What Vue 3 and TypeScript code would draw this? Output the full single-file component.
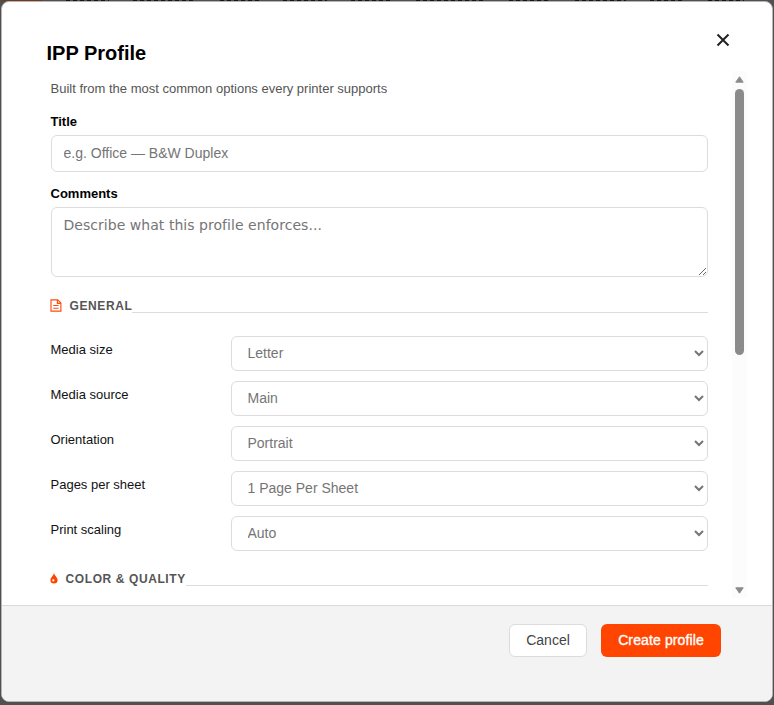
<script setup lang="ts">
import { ref } from 'vue'

interface Option {
  label: string
  value: string
}

const title = ref('')
const comments = ref('')
const general = ref<Option[]>([
  { label: 'Media size', value: 'Letter' },
  { label: 'Media source', value: 'Main' },
  { label: 'Orientation', value: 'Portrait' },
  { label: 'Pages per sheet', value: '1 Page Per Sheet' },
  { label: 'Print scaling', value: 'Auto' },
])
const tabs = [40, 43, 63, 39, 44, 41, 69, 42, 51, 34, 36]
</script>

<template>
  <div class="backdrop">
    <div class="tabs"><i v-for="(w, i) in tabs" :key="i" :class="{ active: i === 0 }" :style="{ width: w + 'px' }"></i></div>
    <section class="modal" role="dialog">
      <header class="head">
        <h2>IPP Profile</h2>
        <button class="close" type="button">
          <svg width="14" height="14" viewBox="0 0 14 14"><path d="M1.5 1.5 12.5 12.5M12.5 1.5 1.5 12.5" /></svg>
        </button>
      </header>
      <div class="body">
        <div class="content">
          <p class="intro">Built from the most common options every printer supports</p>
          <label class="label title-label" for="title">Title</label>
          <input id="title" v-model="title" class="field" type="text" placeholder="e.g. Office — B&amp;W Duplex" />
          <label class="label comments-label" for="comments">Comments</label>
          <textarea id="comments" v-model="comments" class="field area" placeholder="Describe what this profile enforces..."></textarea>
          <div class="section general">
            <svg width="12" height="13" viewBox="0 0 12 13"><path d="M1 .9H7.7L10.9 4V12.1H1ZM7.4 1V4.3H10.8M3.2 6.5H8.6M3.2 9.2H8.6" fill="none" stroke="#ff4b0b" stroke-width="1.15" /></svg>
            <h3>GENERAL</h3><span class="rule"></span>
          </div>
          <div class="rows">
            <div v-for="o in general" :key="o.label" class="row">
              <label>{{ o.label }}</label>
              <select><option>{{ o.value }}</option></select>
            </div>
          </div>
          <div class="section color">
            <svg width="8" height="11" viewBox="0 0 8 11"><path d="M4 .2C4.6 2.7 7.6 4.4 7.6 7A3.6 3.6 0 0 1 .4 7C.4 4.5 3.3 2.7 4 .2Z" fill="#ff4500" /><circle cx="3.3" cy="7.3" r="1.15" fill="#fff" /></svg>
            <h3>COLOR &amp; QUALITY</h3><span class="rule"></span>
          </div>
        </div>
        <div class="scrollbar">
          <svg width="9" height="7" viewBox="0 0 9 7"><path d="M4.5 .8 8.2 6.2H.8Z" /></svg>
          <div class="thumb"></div>
          <svg class="down" width="9" height="7" viewBox="0 0 9 7"><path d="M.8 .8H8.2L4.5 6.2Z" /></svg>
        </div>
      </div>
      <footer class="foot">
        <button type="button" class="btn cancel">Cancel</button>
        <button type="button" class="btn primary">Create profile</button>
      </footer>
    </section>
  </div>
</template>

<style>
body { margin: 0; background: #4d4d4d; overflow: hidden; }
</style>

<style scoped>
* { box-sizing: border-box; }
.backdrop { position: relative; height: 705px; padding: 1px 1px 3px; background: #505050; font-family: "Liberation Sans", Arial, sans-serif; }
.tabs { position: absolute; inset: 0 0 auto 2px; display: flex; gap: 24px; }
.tabs i { height: 1px; background: repeating-linear-gradient(90deg, #161616 0 4px, #505050 4px 7px); }
.tabs .active { background: #76371f; }
.modal { display: flex; flex-direction: column; height: 701px; border: 1px solid #b5b5b5; border-radius: 8px; background: #fff; overflow: hidden; }
.head { display: flex; justify-content: space-between; height: 69px; padding: 31px 42px 0 44.5px; flex: none; }
h2 { margin: 9px 0 0; font-size: 20px; line-height: 23px; font-weight: 700; color: #000; }
.close { width: 14px; height: 14px; padding: 0; border: 0; background: none; }
.close svg { display: block; fill: none; stroke: #222; stroke-width: 2; }
.body { display: flex; height: 534px; flex: none; }
.content { width: 657.5px; margin-left: 48.5px; }
.intro { margin: 10px 0 0; font-size: 13px; line-height: 15px; color: #555; }
.label { display: block; font-size: 13px; line-height: 15px; font-weight: 700; color: #000; }
.title-label { margin-top: 18px; }
.comments-label { margin-top: 14px; }
.field { display: block; width: 100%; height: 37px; margin: 6px 0 0; padding: 0 12px 2px; border: 1px solid #dcdcdc; border-radius: 6px; background: #fff; font-family: inherit; font-size: 14px; color: #333; outline: none; }
.field::placeholder { color: #757575; }
.area { height: 70px; padding: 8px 12px; font-family: "DejaVu Sans", sans-serif; line-height: 19px; letter-spacing: .04px; }
.section { display: flex; align-items: center; height: 15px; }
.section svg { flex: none; margin-left: -1px; }
.general { margin-top: 21px; }
.color { margin-top: 20px; }
h3 { position: relative; top: 1px; margin: 0 0 0 8px; font-size: 12px; line-height: 15px; letter-spacing: .6px; color: #555; white-space: nowrap; }
.rule { flex: 1; align-self: flex-end; height: 1px; background: #dcdcdc; }
.rows { display: grid; gap: 10px; margin-top: 23px; }
.row { display: grid; grid-template-columns: 180px 1fr; height: 35px; font-size: 13px; color: #111; }
.row label { padding-top: 6px; line-height: 15px; }
select { width: 100%; height: 35px; padding: 0 0 2px 12px; border: 1px solid #dcdcdc; border-radius: 6px; background: #fff; font-family: inherit; font-size: 14px; color: #757575; }
.scrollbar { display: flex; flex-direction: column; align-items: center; width: 15px; height: 527px; margin-left: 24px; padding: 5px 0 4px; background: #fcfcfc; fill: #8b8b8b; stroke: #8b8b8b; stroke-linejoin: round; }
.thumb { width: 9px; height: 266px; margin-top: 6px; border-radius: 5px; background: #8b8b8b; }
.down { margin-top: auto; }
.foot { display: flex; flex: 1; justify-content: flex-end; align-items: flex-start; gap: 14px; padding: 18px 51px 0; border-top: 1px solid #dadada; background: #f3f3f3; }
.btn { height: 33px; padding: 0 0 2px; border-radius: 6px; font-family: inherit; font-size: 14px; }
.cancel { width: 78px; border: 1px solid #dcdcdc; background: #fff; color: #444; }
.primary { width: 120px; border: 0; background: #ff4500; color: #fff; letter-spacing: .12px; -webkit-text-stroke: .35px #fff; }
</style>
